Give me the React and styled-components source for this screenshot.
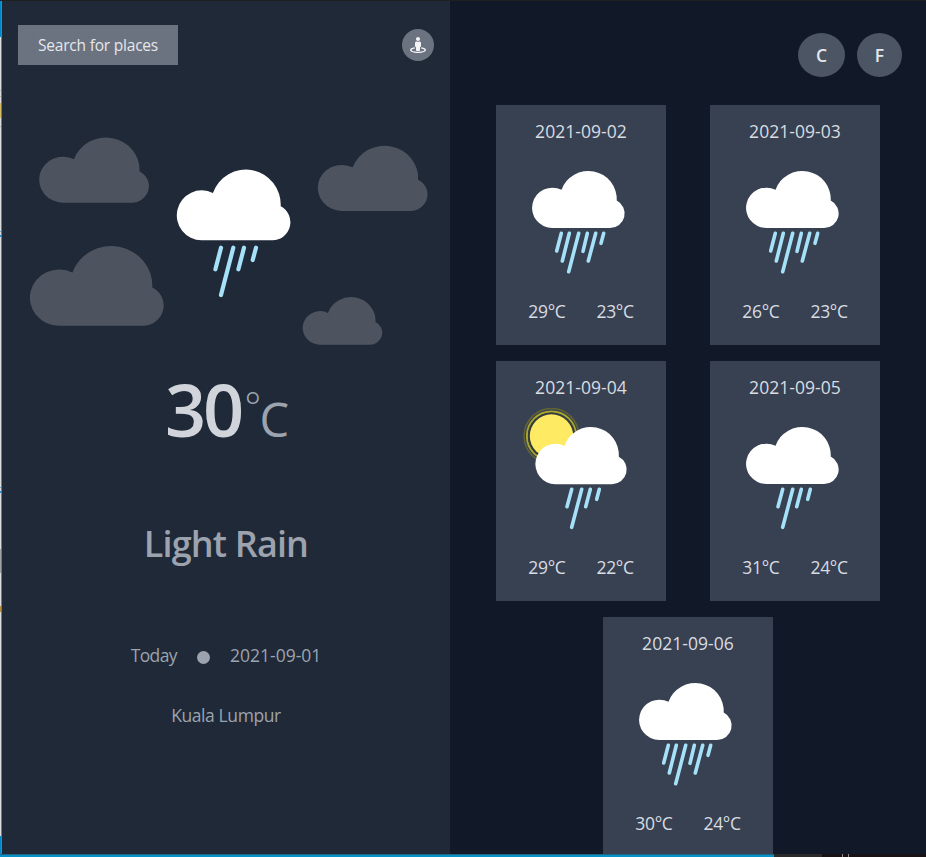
import React from "react";
import styled, { createGlobalStyle } from "styled-components";
import { FaStreetView } from "react-icons/fa";

const GlobalStyle = createGlobalStyle`
  * { box-sizing: border-box; }
  body {
    margin: 0;
    background: #111827;
    font-family: "Open Sans", "Noto Sans", sans-serif;
    overflow: hidden;
  }
  button { font-family: inherit; border: 0; padding: 0; cursor: pointer; }
`;

const Desktop = styled.div`
  display: flex;
  flex-direction: column;
  width: 926px;
  height: 857px;
  overflow: hidden;
  border-top: 1px solid #1f1f22;
`;

const WindowRow = styled.div`
  display: flex;
  height: 853px;
`;

const EdgeStrip = styled.div`
  flex: none;
  width: 2px;
  border-right: 1px solid #76797c;
  display: flex;
  flex-direction: column;
`;

const EdgeSegment = styled.div`
  height: ${(p) => p.$size}px;
  background: ${(p) => p.$color};
`;

const BottomStrip = styled.div`
  display: flex;
  height: 3px;
`;

const BottomSegment = styled.div`
  width: ${(p) => p.$size}px;
  background: ${(p) => p.$color};
  border-top: 1px solid ${(p) => p.$line || p.$color};
`;

const TodayPanel = styled.main`
  flex: none;
  width: 448px;
  background: #1f2937;
  display: flex;
  flex-direction: column;
  align-items: center;
`;

const TopBar = styled.header`
  align-self: stretch;
  display: flex;
  justify-content: space-between;
  align-items: center;
  padding: 24px 16px 0;
`;

const SearchButton = styled.button`
  width: 160px;
  height: 40px;
  background: #6b7280;
  color: #e5e7eb;
  font-size: 15.5px;
  line-height: 40px;
  letter-spacing: -0.2px;
`;

const LocateButton = styled.button`
  width: 32px;
  height: 32px;
  border-radius: 50%;
  background: #6b7280;
  color: #f3f4f6;
  display: flex;
  align-items: center;
  justify-content: center;
  font-size: 16px;
`;

const Scene = styled.svg`
  display: block;
  width: 448px;
  height: 285px;
`;

const Temperature = styled.div`
  display: flex;
  height: 118px;
  line-height: 118px;
  color: #d1d5db;
  font-size: 72px;
  font-weight: 600;
  letter-spacing: -3px;
  align-items: baseline;
  padding-left: 2px;
`;

const DegreeSign = styled.span`
  align-self: flex-start;
  margin: -2px -2px 0 3px;
  color: #9ca3af;
  font-size: 40px;
  font-weight: 300;
  letter-spacing: 0;
`;

const UnitLetter = styled.span`
  color: #9ca3af;
  font-size: 47px;
  font-weight: 400;
  letter-spacing: 0;
`;

const Condition = styled.h1`
  margin: 49px 0 0;
  height: 54px;
  line-height: 54px;
  color: #9ca3af;
  font-size: 36px;
  font-weight: 600;
  letter-spacing: -0.85px;
`;

const DateLine = styled.div`
  display: flex;
  align-items: center;
  gap: 20px;
  margin-top: 70px;
  height: 28px;
  line-height: 28px;
  color: #9ca3af;
  font-size: 17.5px;
`;

const TodayLabel = styled.span`
  letter-spacing: -0.6px;
`;

const Dot = styled.i`
  width: 13px;
  height: 13px;
  margin-top: 4px;
  border-radius: 50%;
  background: #9ca3af;
`;

const Place = styled.div`
  margin-top: 32px;
  height: 28px;
  line-height: 28px;
  color: #9ca3af;
  font-size: 17.5px;
  letter-spacing: -0.4px;
`;

const ForecastPanel = styled.aside`
  flex: 1;
  background: #111827;
  overflow: hidden;
`;

const Units = styled.div`
  display: flex;
  justify-content: flex-end;
  gap: 12px;
  padding: 32px 24px 0;
`;

const UnitButton = styled.button`
  width: ${(p) => p.$width}px;
  height: 44px;
  border-radius: 50%;
  background: #4b5563;
  color: #e5e7eb;
  font-size: 17.5px;
  font-weight: 600;
  line-height: 44px;
`;

const Cards = styled.section`
  display: flex;
  flex-wrap: wrap;
  justify-content: center;
  gap: 16px 44px;
  margin-top: 28px;
`;

const Card = styled.article`
  width: 170px;
  height: 240px;
  background: #374151;
  color: #d9dce1;
  font-size: 17.5px;
  letter-spacing: -0.35px;
`;

const CardDate = styled.div`
  height: 52px;
  line-height: 52px;
  letter-spacing: 0.05px;
  text-align: center;
`;

const CardArt = styled.svg`
  display: block;
  width: 170px;
  height: 140px;
  margin-top: -12px;
`;

const Range = styled.div`
  display: flex;
  justify-content: center;
  gap: 31px;
  margin-top: 12px;
  height: 28px;
  line-height: 28px;
`;

const CLOUD = "M75 212A75 75 0 1 1 109 70A105 105 0 0 1 313 110A54 54 0 0 1 288 212Z";

/* Cloud outline stretched into the box given by x, y, w and h. */
const Cloud = ({ x, y, w, h, color = "#fff" }) => (
  <path d={CLOUD} fill={color} transform={`translate(${x} ${y}) scale(${w / 343.5} ${h / 212})`} />
);

const Rain = ({ drops, width, dx = 0 }) => (
  <g stroke="#a5e1f8" strokeWidth={width} strokeLinecap="round" transform={`translate(${dx} 0)`}>
    {drops.map(([x1, y1, x2, y2]) => (
      <line key={x1} x1={x1} y1={y1} x2={x2} y2={y2} />
    ))}
  </g>
);

const MAIN_RAIN = [
  [221, 247.7, 215.4, 269.3],
  [233.3, 247.7, 221, 295],
  [244, 247.7, 238.4, 269.3],
  [256, 247.7, 252.7, 260],
];
const HEAVY_RAIN = [
  [65.3, 128.3, 60.7, 146],
  [73.3, 128.3, 66.3, 156],
  [82.7, 128.3, 72.7, 166.7],
  [91.3, 128.3, 87, 146.3],
  [99.7, 128.3, 92.3, 156],
  [107.7, 128.3, 105, 138.3],
];
const LIGHT_RAIN = [
  [75.7, 128.3, 71, 145.7],
  [85.7, 128.3, 75.7, 166.3],
  [94.3, 128.3, 89.7, 145.7],
  [103.3, 128.3, 100.7, 138.3],
];

const Art = ({ kind }) => (
  <CardArt viewBox="0 40 170 140">
    {kind === "sun" && (
      <g fill="none">
        <circle cx="55.5" cy="75" r="27.4" stroke="#626433" strokeWidth="1.5" />
        <circle cx="55.5" cy="75" r="24.6" stroke="#aaa52d" strokeWidth="2" />
        <circle cx="55.5" cy="75" r="22.6" stroke="#353b3d" strokeWidth="2" />
        <circle cx="55.5" cy="75" r="21.7" fill="#ffea64" />
      </g>
    )}
    {kind === "sun" ? <Cloud x={39.3} y={66} w={91.7} h={57.2} /> : <Cloud x={36} y={66} w={93} h={57} />}
    <Rain drops={kind === "heavy" ? HEAVY_RAIN : LIGHT_RAIN} dx={kind === "light" ? -3 : 0} width={3.6} />
  </CardArt>
);

const FORECAST = [
  ["2021-09-02", "heavy", 29, 23],
  ["2021-09-03", "heavy", 26, 23],
  ["2021-09-04", "sun", 29, 22],
  ["2021-09-05", "light", 31, 24],
  ["2021-09-06", "heavy", 30, 24],
];

const EDGE = [
  [36, "#0089c7"], [53, "#dcdcdc"], [1, "#b5b5b5"], [5, "#dcdcdc"], [1, "#b5b5b5"], [6, "#dcdcdc"],
  [15, "#d8bd65"], [8, "#dcdcdc"], [1, "#b5b5b5"], [104, "#dcdcdc"], [1, "#5aa6d5"], [3, "#dcdcdc"],
  [2, "#268bcd"], [250, "#dcdcdc"], [1, "#5aa6d5"], [3, "#dcdcdc"], [2, "#268bcd"], [56, "#dcdcdc"],
  [24, "#a3a3a3"], [33, "#dcdcdc"], [6, "#b88e3a"], [224, "#dcdcdc"], [18, "#0089c7"],
];

export default function App() {
  return (
    <>
      <GlobalStyle />
      <Desktop>
        <WindowRow>
          <EdgeStrip>
            {EDGE.map(([size, color], i) => (
              <EdgeSegment key={i} $size={size} $color={color} />
            ))}
          </EdgeStrip>
          <TodayPanel>
            <TopBar>
              <SearchButton>Search for places</SearchButton>
              <LocateButton aria-label="Use my location"><FaStreetView /></LocateButton>
            </TopBar>
            <Scene viewBox="2 65 448 285">
              <Cloud x={39} y={137.7} w={110.3} h={65} color="#4d545f" />
              <Cloud x={317.7} y={145.9} w={110.2} h={65} color="#4d545f" />
              <Cloud x={29.8} y={246.2} w={134.4} h={79.6} color="#4d545f" />
              <Cloud x={302.6} y={297.2} w={80} h={47.6} color="#4d545f" />
              <Cloud x={176.7} y={169.7} w={114.1} h={70.6} />
              <Rain drops={MAIN_RAIN} width={4.2} />
            </Scene>
            <Temperature>
              30
              <DegreeSign>°</DegreeSign>
              <UnitLetter>C</UnitLetter>
            </Temperature>
            <Condition>Light Rain</Condition>
            <DateLine>
              <TodayLabel>Today</TodayLabel>
              <Dot />
              <span>2021-09-01</span>
            </DateLine>
            <Place>Kuala Lumpur</Place>
          </TodayPanel>
          <ForecastPanel>
            <Units>
              <UnitButton $width={47}>C</UnitButton>
              <UnitButton $width={45}>F</UnitButton>
            </Units>
            <Cards>
              {FORECAST.map(([date, kind, max, min]) => (
                <Card key={date}>
                  <CardDate>{date}</CardDate>
                  <Art kind={kind} />
                  <Range>
                    <span>{max}°C</span>
                    <span>{min}°C</span>
                  </Range>
                </Card>
              ))}
            </Cards>
          </ForecastPanel>
        </WindowRow>
        <BottomStrip>
          <BottomSegment $size={774} $color="#0592c8" $line="#236582" />
          <BottomSegment $size={48} $color="#2a2a2b" />
          <BottomSegment $size={20} $color="#191214" />
          <BottomSegment $size={1} $color="#8a8a8a" />
          <BottomSegment $size={5} $color="#191214" />
          <BottomSegment $size={1} $color="#8a8a8a" />
          <BottomSegment $size={77} $color="#191214" />
        </BottomStrip>
      </Desktop>
    </>
  );
}
